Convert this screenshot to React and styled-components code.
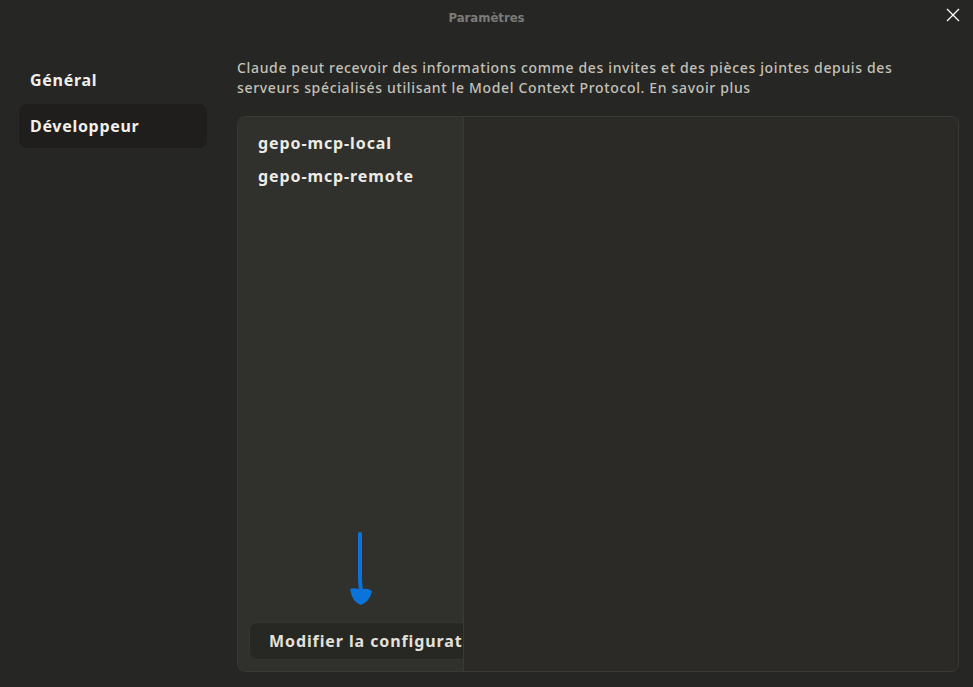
import React from 'react'
import styled, { createGlobalStyle } from 'styled-components'

const Global = createGlobalStyle`
  html, body { margin: 0; padding: 0; background: #262624; }
  body { font-family: "Noto Sans", sans-serif; }
  * { box-sizing: border-box; }
`

const Window = styled.div`
  width: 973px;
  height: 687px;
  background: #262624;
  display: flex;
  flex-direction: column;
  overflow: hidden;
`

const TitleBar = styled.div`
  height: 35px;
  flex-shrink: 0;
  position: relative;
  display: flex;
  align-items: center;
  justify-content: center;
  color: #7b7b78;
  font-family: "DejaVu Sans Condensed", "DejaVu Sans", sans-serif;
  font-weight: bold;
  font-size: 13px;
`

const CloseBtn = styled.div`
  position: absolute;
  right: 13px;
  top: 8px;
  width: 14px;
  height: 14px;
`

const Body = styled.div`
  flex: 1;
  display: flex;
  padding: 0 14px 15px 19px;
`

const Sidebar = styled.div`
  width: 188px;
  flex-shrink: 0;
  display: flex;
  flex-direction: column;
  gap: 2px;
  padding-top: 23px;
  margin-right: 30px;
`

const NavItem = styled.div`
  height: 44px;
  display: flex;
  align-items: center;
  padding-left: 11px;
  border-radius: 8px;
  font-size: 16px;
  font-weight: 700;
  letter-spacing: 0.7px;
  color: #f2f0ea;
  background: ${p => (p.active ? '#1f1e1d' : 'transparent')};
`

const Main = styled.div`
  flex: 1;
  display: flex;
  flex-direction: column;
  padding-top: 23px;
`

const Desc = styled.p`
  margin: 0 0 18px;
  font-size: 14px;
  line-height: 20px;
  letter-spacing: 0.65px;
  color: #c3c1b8;
  font-weight: 500;
`

const Panel = styled.div`
  flex: 1;
  display: flex;
  border: 1px solid #3a3a35;
  border-radius: 8px;
  background: #2b2a26;
  overflow: hidden;
`

const ServerList = styled.div`
  width: 226px;
  flex-shrink: 0;
  background: #30302c;
  border-right: 1px solid #3a3a35;
  display: flex;
  flex-direction: column;
  padding: 9px 0 11px 11px;
  overflow: hidden;
`

const Server = styled.div`
  padding-left: 9px;
  height: 33px;
  display: flex;
  align-items: center;
  font-size: 16px;
  font-weight: 700;
  letter-spacing: 0.9px;
  color: #ecebe5;
`

const Spacer = styled.div`
  flex: 1;
  display: flex;
  align-items: flex-end;
  padding: 0 0 13px 97px;
`

const ConfigButton = styled.div`
  height: 38px;
  margin-right: -80px;
  border: 1px solid #35352f;
  border-radius: 8px;
  background: #272724;
  display: flex;
  align-items: center;
  padding-left: 19px;
  white-space: nowrap;
  font-size: 16px;
  font-weight: 700;
  letter-spacing: 0.9px;
  color: #e3e1da;
`

const Detail = styled.div`
  flex: 1;
`

const Arrow = () => (
  <svg width="30" height="78" viewBox="0 0 30 78">
    <path d="M14 3 L14 48 Q14.5 56 15 60" stroke="#0a74da" strokeWidth="4" strokeLinecap="round" fill="none" />
    <path d="M4 58 Q9 56 15 59 Q21 56 26 60 Q24 70 15 74 Q6 71 4 58 Z" fill="#0a74da" />
  </svg>
)

export default function App() {
  return (
    <Window>
      <Global />
      <TitleBar>
        Paramètres
        <CloseBtn>
          <svg width="14" height="14" viewBox="0 0 14 14">
            <path d="M1 1 L13 13 M13 1 L1 13" stroke="#ffffff" strokeWidth="1.3" />
          </svg>
        </CloseBtn>
      </TitleBar>
      <Body>
        <Sidebar>
          <NavItem>Général</NavItem>
          <NavItem active>Développeur</NavItem>
        </Sidebar>
        <Main>
          <Desc>
            Claude peut recevoir des informations comme des invites et des pièces jointes depuis des
            serveurs spécialisés utilisant le Model Context Protocol. En savoir plus
          </Desc>
          <Panel>
            <ServerList>
              <Server>gepo-mcp-local</Server>
              <Server>gepo-mcp-remote</Server>
              <Spacer>
                <Arrow />
              </Spacer>
              <ConfigButton>Modifier la configuration</ConfigButton>
            </ServerList>
            <Detail />
          </Panel>
        </Main>
      </Body>
    </Window>
  )
}
